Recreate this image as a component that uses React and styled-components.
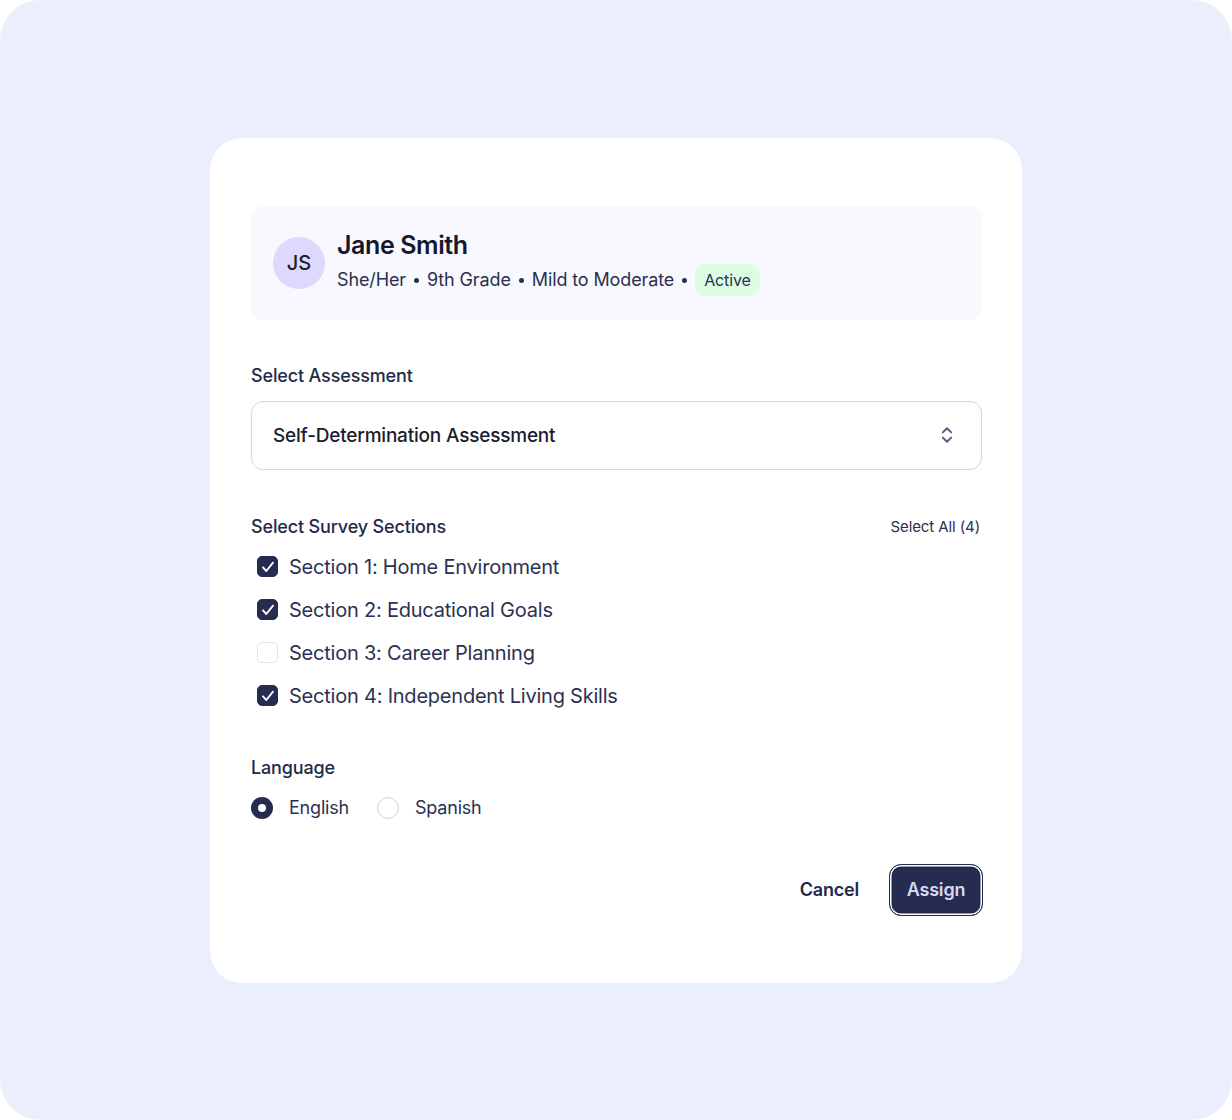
import React from "react";
import styled, { createGlobalStyle } from "styled-components";

const GlobalStyle = createGlobalStyle`
  html, body {
    margin: 0;
    padding: 0;
    background: #ffffff;
  }
  body {
    font-family: Inter, "Noto Sans", "Liberation Sans", sans-serif;
    -webkit-font-smoothing: antialiased;
  }
`;

const Page = styled.div`
  width: 1232px;
  height: 1120px;
  box-sizing: border-box;
  background: #ebeefd;
  border-radius: 40px;
  display: flex;
  align-items: center;
  justify-content: center;
`;

const Dialog = styled.div`
  width: 812px;
  box-sizing: border-box;
  background: #ffffff;
  border-radius: 32px;
  padding: 68px 40px 67px 41px;
  display: flex;
  flex-direction: column;
`;

const StudentCard = styled.div`
  height: 114px;
  box-sizing: border-box;
  background: #f8f9fe;
  border-radius: 12px;
  padding: 0 22px;
  display: flex;
  align-items: center;
  gap: 12px;
`;

const Avatar = styled.div`
  width: 52px;
  height: 52px;
  border-radius: 50%;
  background: #ddd9fc;
  color: #1b1d2e;
  font-size: 20px;
  font-weight: 500;
  display: flex;
  align-items: center;
  justify-content: center;
  flex-shrink: 0;
`;

const StudentInfo = styled.div`
  display: flex;
  flex-direction: column;
  gap: 3px;
`;

const StudentName = styled.div`
  font-size: 25px;
  font-weight: 600;
  letter-spacing: -0.4px;
  color: #15172a;
  line-height: 32px;
`;

const MetaRow = styled.div`
  display: flex;
  align-items: center;
  font-size: 18px;
  letter-spacing: -0.12px;
  color: #2b3050;
  line-height: 32px;
`;

const Dot = styled.span`
  width: 5px;
  height: 5px;
  border-radius: 50%;
  background: #2b3050;
  margin: 0 8px;
`;

const Badge = styled.span`
  height: 32px;
  display: inline-flex;
  align-items: center;
  padding: 0 9px;
  border-radius: 10px;
  background: #dcfce6;
  color: #2b3050;
  font-size: 16px;
`;

const Section = styled.div`
  display: flex;
  flex-direction: column;
  gap: 14px;
  margin-top: ${(p) => p.$top || 46}px;
`;

const LabelRow = styled.div`
  display: flex;
  align-items: center;
  justify-content: space-between;
`;

const Label = styled.div`
  font-size: 18px;
  font-weight: 500;
  letter-spacing: -0.15px;
  line-height: 22px;
  color: #232949;
`;

const LinkButton = styled.button`
  border: 0;
  background: none;
  padding: 0;
  font-family: inherit;
  font-size: 15px;
  letter-spacing: -0.1px;
  color: #2a2f4f;
  margin-right: 2px;
  cursor: pointer;
`;

const SelectBox = styled.div`
  height: 69px;
  box-sizing: border-box;
  border: 1.5px solid #d6d6dd;
  border-radius: 12px;
  padding: 0 22px 0 21px;
  display: flex;
  align-items: center;
  justify-content: space-between;
  font-size: 19px;
  font-weight: 500;
  letter-spacing: -0.2px;
  color: #1a1c2e;
`;

const CheckList = styled.div`
  display: flex;
  flex-direction: column;
  gap: 13px;
  padding-left: 6px;
`;

const OptionRow = styled.label`
  height: 30px;
  display: flex;
  align-items: center;
  gap: 11px;
  font-size: 20px;
  letter-spacing: -0.22px;
  color: #2c3152;
  cursor: pointer;
`;

const CheckBox = styled.span`
  width: 21px;
  height: 21px;
  box-sizing: border-box;
  border-radius: 5px;
  background: ${(p) => (p.$checked ? "#262b50" : "#ffffff")};
  border: 1px solid ${(p) => (p.$checked ? "#262b50" : "#e3e4ea")};
  display: flex;
  align-items: center;
  justify-content: center;
`;

const RadioGroup = styled.div`
  display: flex;
  align-items: center;
  gap: 28px;
`;

const RadioOption = styled.label`
  height: 30px;
  display: flex;
  align-items: center;
  gap: 16px;
  font-size: 18px;
  letter-spacing: -0.2px;
  color: #2c3152;
  cursor: pointer;
`;

const RadioDot = styled.span`
  width: 22px;
  height: 22px;
  box-sizing: border-box;
  border-radius: 50%;
  ${(p) =>
    p.$checked
      ? `background: #262b50; border: 0;`
      : `background: #ffffff; border: 1px solid #d4d5dc;`}
  display: flex;
  align-items: center;
  justify-content: center;
  &::after {
    content: "";
    display: ${(p) => (p.$checked ? "block" : "none")};
    width: 8px;
    height: 8px;
    border-radius: 50%;
    background: #ffffff;
  }
`;

const Actions = styled.div`
  display: flex;
  justify-content: flex-end;
  align-items: center;
  gap: 30px;
  margin-top: 41px;
`;

const CancelButton = styled.button`
  border: 0;
  background: none;
  padding: 0;
  font-family: inherit;
  font-size: 18px;
  font-weight: 600;
  letter-spacing: -0.2px;
  color: #22284a;
  cursor: pointer;
`;

const PrimaryButton = styled.button`
  width: 94px;
  height: 52px;
  margin-right: -1px;
  border-radius: 12px;
  border: 1px solid #262b50;
  background: #262b50;
  box-shadow: inset 0 0 0 1.5px #ffffff, inset 0 0 0 2.5px #262b50;
  color: #d8d8f4;
  font-family: inherit;
  font-size: 18px;
  font-weight: 600;
  letter-spacing: -0.2px;
  cursor: pointer;
`;

const sections = [
  { title: "Section 1: Home Environment", checked: true },
  { title: "Section 2: Educational Goals", checked: true },
  { title: "Section 3: Career Planning", checked: false },
  { title: "Section 4: Independent Living Skills", checked: true },
];

const CheckIcon = () => (
  <svg width="16" height="16" viewBox="0 0 24 24" fill="none" stroke="#ffffff" strokeWidth="2.8" strokeLinecap="round" strokeLinejoin="round">
    <path d="M4.5 12.5l5 5.5L19.5 5.5" />
  </svg>
);

const UpDownIcon = () => (
  <svg width="24" height="24" viewBox="0 0 24 24" fill="none" stroke="#5a5f7c" strokeWidth="2" strokeLinecap="round" strokeLinejoin="round">
    <path d="m7.8 9.4 4.2-4.2 4.2 4.2" />
    <path d="m7.8 14.6 4.2 4.2 4.2-4.2" />
  </svg>
);

export default function App() {
  const selectedCount = sections.length;
  return (
    <>
      <GlobalStyle />
      <Page>
        <Dialog>
          <StudentCard>
            <Avatar>JS</Avatar>
            <StudentInfo>
              <StudentName>Jane Smith</StudentName>
              <MetaRow>
                She/Her
                <Dot />
                9th Grade
                <Dot />
                Mild to Moderate
                <Dot />
                <Badge>Active</Badge>
              </MetaRow>
            </StudentInfo>
          </StudentCard>

          <Section $top={45}>
            <Label>Select Assessment</Label>
            <SelectBox>
              Self-Determination Assessment
              <UpDownIcon />
            </SelectBox>
          </Section>

          <Section>
            <LabelRow>
              <Label>Select Survey Sections</Label>
              <LinkButton>Select All ({selectedCount})</LinkButton>
            </LabelRow>
            <CheckList>
              {sections.map((s) => (
                <OptionRow key={s.title}>
                  <CheckBox $checked={s.checked}>{s.checked && <CheckIcon />}</CheckBox>
                  {s.title}
                </OptionRow>
              ))}
            </CheckList>
          </Section>

          <Section>
            <Label>Language</Label>
            <RadioGroup>
              <RadioOption>
                <RadioDot $checked />
                English
              </RadioOption>
              <RadioOption>
                <RadioDot />
                Spanish
              </RadioOption>
            </RadioGroup>
          </Section>

          <Actions>
            <CancelButton>Cancel</CancelButton>
            <PrimaryButton>Assign</PrimaryButton>
          </Actions>
        </Dialog>
      </Page>
    </>
  );
}
